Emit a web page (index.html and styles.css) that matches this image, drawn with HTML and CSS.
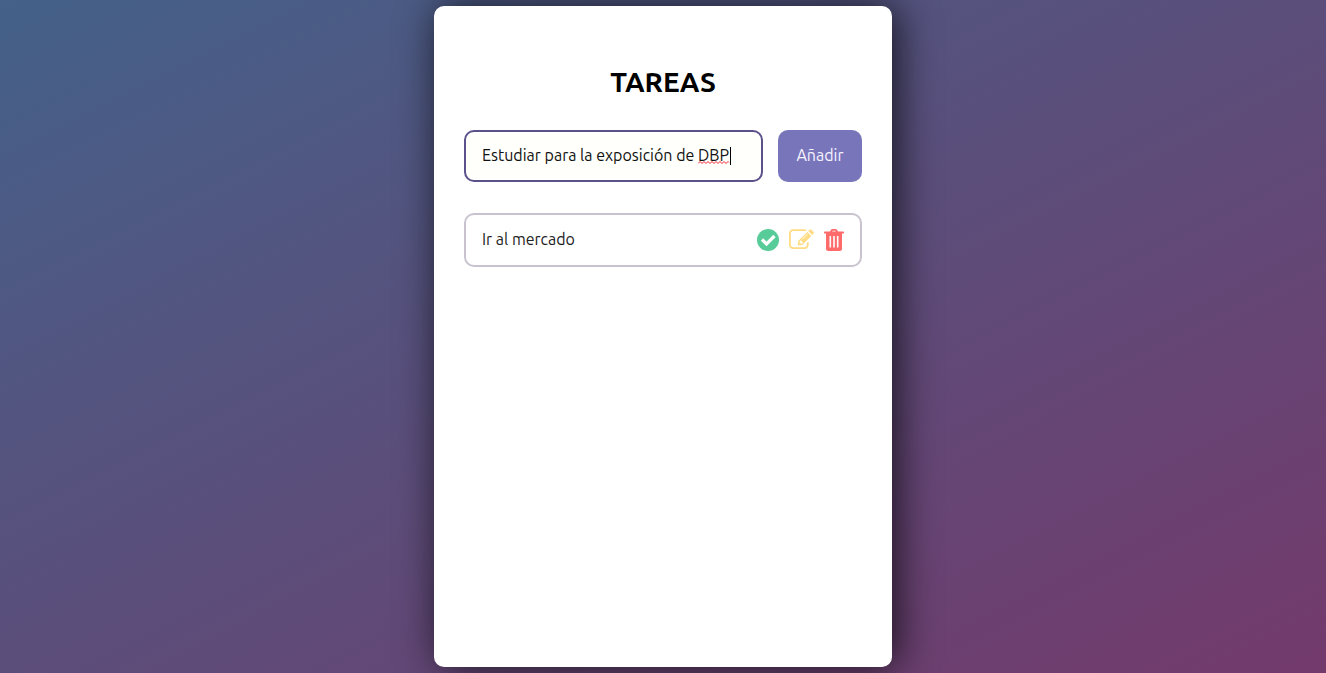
FILE: index.html
```html
<!DOCTYPE html>
<html lang="es">
<head>
  <meta charset="utf-8">
  <meta name="viewport" content="width=device-width, initial-scale=1">
  <title>Tareas</title>
  <link rel="stylesheet" href="styles.css">
</head>
<body>
  <main class="card">
    <h1 class="title">TAREAS</h1>
    <form class="task-form">
      <div class="field">
        <input class="task-input" type="text" aria-label="Nueva tarea" value="Estudiar para la exposición de DBP" spellcheck="false">
        <svg class="spelling" width="33" height="3" viewBox="0 0 33 3" aria-hidden="true"><path d="M0 2.5 2 .5l2 2 2-2 2 2 2-2 2 2 2-2 2 2 2-2 2 2 2-2 2 2 2-2 2 2 2-2 1 1"/></svg>
        <span class="caret"></span>
      </div>
      <button class="add-button" type="button">Añadir</button>
    </form>
    <ul class="task-list">
      <li class="task">
        <span class="task-name">Ir al mercado</span>
        <div class="actions">
          <button class="action done" type="button" aria-label="Completar">
            <svg width="22" height="22" viewBox="0 0 22 22"><circle cx="11" cy="11" r="11" fill="currentColor"/><path d="M5 10.500 9.500 15 17.500 7" fill="none" stroke="#fff" stroke-width="3.2"/></svg>
          </button>
          <button class="action edit" type="button" aria-label="Editar">
            <svg width="25" height="22" viewBox="0 0 1792 1536"><path fill="currentColor" d="M888 1056l116-116-152-152-116 116v56h96v96h56zm440-720q-16-16-33 1l-350 350q-17 17-1 33t33-1l350-350q17-17 1-33zm80 594v190q0 119-84.500 203.500t-203.500 84.500h-832q-119 0-203.500-84.500t-84.500-203.500v-832q0-119 84.500-203.500t203.500-84.500h832q63 0 117 25 15 7 18 23 3 17-9 29l-49 49q-14 14-32 8-23-6-45-6h-832q-66 0-113 47t-47 113v832q0 66 47 113t113 47h832q66 0 113-47t47-113v-126q0-13 9-22l64-64q15-15 35-7t20 29zm-96-738l288 288-672 672h-288v-288zm444 132l-92 92-288-288 92-92q28-28 68-28t68 28l152 152q28 28 28 68t-28 68z"/></svg>
          </button>
          <button class="action delete" type="button" aria-label="Eliminar">
            <svg width="20" height="22" viewBox="0 0 20 22"><path fill="currentColor" fill-rule="evenodd" d="M6 2.500 7 .8Q7.500 0 8.500 0h3Q12.500 0 13 .8L14 2.500h5.200q.8 0 .8.800v.7q0 .5-.8.500H18V19.500Q18 22 15.500 22h-11Q2 22 2 19.500V4.500H.8Q0 4.500 0 4v-.7q0-.8.800-.8Zm2.200 0h3.600l-.5-.8H8.700ZM5.500 7v11.500h1.600V7Zm3.700 0v11.500h1.600V7Zm3.700 0v11.500h1.600V7Z"/></svg>
          </button>
        </div>
      </li>
    </ul>
  </main>
</body>
</html>
```
FILE: styles.css
```css
* {
  box-sizing: border-box;
}

body {
  margin: 0;
  min-height: 100vh;
  padding: 6px 16px;
  display: flex;
  justify-content: center;
  font-family: Ubuntu, "Noto Sans", sans-serif;
  font-size: 16px;
  background: linear-gradient(to bottom right, #446189, #733a6c);
}

.card {
  width: 100%;
  max-width: 458px;
  padding: 56px 30px 30px;
  border-radius: 10px;
  background: #fff;
  box-shadow: 5px 0 40px rgba(0, 0, 0, 0.75);
}

.title {
  margin: 0 0 28px;
  font-size: 28px;
  line-height: 40px;
  text-align: center;
}

.task-form {
  display: flex;
  gap: 15px;
  margin-bottom: 31px;
}

.field {
  position: relative;
  flex: 1;
}

.task-input {
  width: 100%;
  height: 52px;
  padding: 0 16px 2px;
  border: 2px solid #5d518c;
  border-radius: 10px;
  outline: none;
  background: #fffffb;
  color: #111;
  font: inherit;
}

.spelling {
  position: absolute;
  top: 31px;
  right: 32px;
  fill: none;
  stroke: #f02030;
}

.caret {
  position: absolute;
  top: 17px;
  right: 32px;
  width: 1px;
  height: 18px;
  background: #000;
}

.add-button {
  width: 84px;
  height: 52px;
  padding: 0 0 2px;
  border: 0;
  border-radius: 10px;
  background: #7975bb;
  color: #f5f3ff;
  font: inherit;
}

.task-list {
  margin: 0;
  padding: 0;
  list-style: none;
}

.task {
  display: flex;
  align-items: center;
  justify-content: space-between;
  min-height: 54px;
  padding: 0 16px;
  border: 2px solid #c9c3cf;
  border-radius: 10px;
  color: #212121;
}

.task-name {
  padding-bottom: 2px;
}

.actions {
  display: flex;
  gap: 10px;
}

.action {
  display: flex;
  padding: 0;
  border: 0;
  background: none;
}

.done {
  color: #57cc99;
}

.edit {
  color: #ffdc82;
}

.delete {
  color: #ff6b6b;
}
```
